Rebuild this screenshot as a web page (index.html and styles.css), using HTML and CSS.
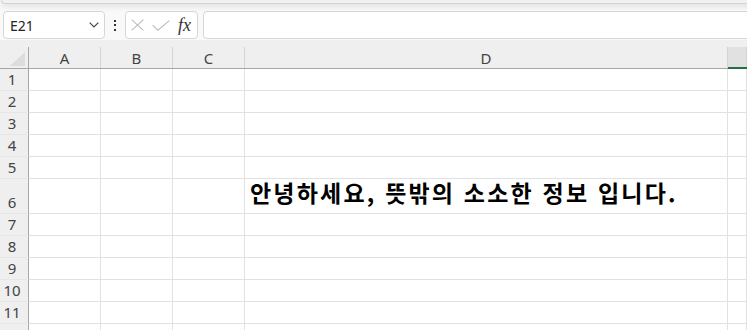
FILE: index.html
```html
<!DOCTYPE html>
<html lang="ko">
<head>
    <meta charset="UTF-8">
    <meta name="viewport" content="width=device-width, initial-scale=1.0">
    <title>통합 문서1 - Excel</title>
    <link rel="stylesheet" href="styles.css">
</head>
<body>

    <div class="ribbon-edge"></div>

    <!-- 이름 상자 + 수식 입력줄 -->
    <div class="formula-bar">
        <div class="name-box">
            <span>E21</span>
            <svg class="chevron" width="10" height="6" viewBox="0 0 10 6"><path d="M0.7 0.7 L5 5 L9.3 0.7" fill="none" stroke="#444" stroke-width="1.2"/></svg>
        </div>
        <div class="dots"><i></i><i></i><i></i></div>
        <div class="fx-box">
            <svg width="13" height="12" viewBox="0 0 13 12"><path d="M0.6 0.6 L12.4 11.4 M12.4 0.6 L0.6 11.4" fill="none" stroke="#bdbdbd" stroke-width="1.1"/></svg>
            <svg width="18" height="11" viewBox="0 0 18 11"><path d="M0.6 5.2 L5.8 10.2 L17.4 0.6" fill="none" stroke="#bdbdbd" stroke-width="1.1"/></svg>
            <span class="fx">fx</span>
        </div>
        <div class="formula-input"></div>
    </div>

    <!-- 워크시트 -->
    <div class="sheet">
        <div class="corner"><div class="label"><svg width="15" height="14" viewBox="0 0 15 14"><polygon points="15,0 15,14 0,14" fill="#dcdcdc"/></svg></div></div>
        <div class="col-head"><div class="label">A</div></div>
        <div class="col-head"><div class="label">B</div></div>
        <div class="col-head"><div class="label">C</div></div>
        <div class="col-head"><div class="label">D</div></div>
        <div class="col-head active"><div class="label"></div></div>

        <div class="row-head">1</div><div class="cell"></div><div class="cell"></div><div class="cell"></div><div class="cell"></div><div class="cell"></div>
        <div class="row-head">2</div><div class="cell"></div><div class="cell"></div><div class="cell"></div><div class="cell"></div><div class="cell"></div>
        <div class="row-head">3</div><div class="cell"></div><div class="cell"></div><div class="cell"></div><div class="cell"></div><div class="cell"></div>
        <div class="row-head">4</div><div class="cell"></div><div class="cell"></div><div class="cell"></div><div class="cell"></div><div class="cell"></div>
        <div class="row-head">5</div><div class="cell"></div><div class="cell"></div><div class="cell"></div><div class="cell"></div><div class="cell"></div>
        <div class="row-head">6</div><div class="cell"></div><div class="cell"></div><div class="cell"></div><div class="cell note">안녕하세요, 뜻밖의 소소한 정보 입니다.</div><div class="cell"></div>
        <div class="row-head">7</div><div class="cell"></div><div class="cell"></div><div class="cell"></div><div class="cell"></div><div class="cell"></div>
        <div class="row-head">8</div><div class="cell"></div><div class="cell"></div><div class="cell"></div><div class="cell"></div><div class="cell"></div>
        <div class="row-head">9</div><div class="cell"></div><div class="cell"></div><div class="cell"></div><div class="cell"></div><div class="cell"></div>
        <div class="row-head">10</div><div class="cell"></div><div class="cell"></div><div class="cell"></div><div class="cell"></div><div class="cell"></div>
        <div class="row-head">11</div><div class="cell"></div><div class="cell"></div><div class="cell"></div><div class="cell"></div><div class="cell"></div>
        <div class="row-head">12</div><div class="cell"></div><div class="cell"></div><div class="cell"></div><div class="cell"></div><div class="cell"></div>
    </div>

</body>
</html>
```

FILE: styles.css
```css
body {
    margin: 0;
    background-color: #f9f9f9;
    font-family: "Noto Sans", "Liberation Sans", sans-serif;
    color: #333;
    overflow: hidden;
}

/* borda inferior da faixa de opções */
.ribbon-edge {
    height: 3px;
    margin: 0 -10px 0 1px;
    background-color: #f1f1f1;
    border: 1px solid #d3d3d3;
    border-top: none;
    border-radius: 0 0 6px 6px;
    box-shadow: 0 2px 6px rgba(0, 0, 0, 0.14);
}

.formula-bar {
    display: flex;
    align-items: center;
    height: 28px;
    margin-top: 7px;
    padding-left: 3px;
}
.name-box {
    width: 102px;
    height: 28px;
    box-sizing: border-box;
    display: flex;
    align-items: center;
    justify-content: space-between;
    padding: 0 5px 0 6px;
    background-color: #fff;
    border: 1px solid #d6d6d6;
    border-radius: 4px;
    font-size: 14px;
    color: #222;
}
.dots {
    width: 20px;
    display: flex;
    flex-direction: column;
    align-items: center;
    gap: 2.5px;
}
.dots i {
    width: 2px;
    height: 2px;
    background-color: #333;
}
.fx-box {
    width: 73px;
    height: 28px;
    box-sizing: border-box;
    display: flex;
    align-items: center;
    gap: 8px;
    padding-left: 5px;
    background-color: #fff;
    border: 1px solid #d6d6d6;
    border-radius: 4px;
}
.fx {
    font-family: "Liberation Serif", serif;
    font-style: italic;
    font-size: 18px;
    color: #333;
}
.formula-input {
    flex: 1;
    height: 28px;
    box-sizing: border-box;
    margin: 0 -10px 0 5px;
    background-color: #fff;
    border: 1px solid #d6d6d6;
    border-radius: 4px;
}

/* planilha */
.sheet {
    display: grid;
    grid-template-columns: 29px 72px 72px 72px 483px 1fr;
    grid-template-rows: 29px repeat(5, 22px) 35px repeat(6, 22px);
    margin-top: 1px;
}
.corner,
.col-head {
    box-sizing: border-box;
    padding-top: 7px;
    background-color: #efefef;
    border-bottom: 1px solid #a6a6a6;
}
.col-head .label {
    height: 100%;
    box-sizing: border-box;
    display: flex;
    align-items: center;
    justify-content: center;
    border-right: 1px solid #d4d4d4;
    font-size: 15px;
    color: #444;
}
.corner .label {
    height: 100%;
    box-sizing: border-box;
    display: flex;
    align-items: flex-end;
    justify-content: flex-end;
    padding: 0 3px 2px 0;
    border-right: 1px solid #a6a6a6;
}
.col-head.active {
    border-bottom: 2px solid #1e7145;
}
.col-head.active .label {
    background-color: #e1e1e1;
}
.row-head {
    box-sizing: border-box;
    display: flex;
    align-items: flex-end;
    justify-content: center;
    padding: 0 4px 2px 0;
    background-color: #efefef;
    border-right: 1px solid #a6a6a6;
    border-bottom: 1px solid #e6e6e6;
    font-size: 15px;
    line-height: 18px;
    color: #444;
}
.cell {
    box-sizing: border-box;
    background-color: #fff;
    border-right: 1px solid #e1e1e1;
    border-bottom: 1px solid #e1e1e1;
}
.cell.note {
    display: flex;
    align-items: flex-end;
    padding: 0 0 7px 5px;
    font-family: "Noto Sans CJK KR", sans-serif;
    font-weight: 700;
    font-size: 23px;
    line-height: 28px;
    letter-spacing: 2.2px;
    color: #000;
    white-space: nowrap;
}
```
